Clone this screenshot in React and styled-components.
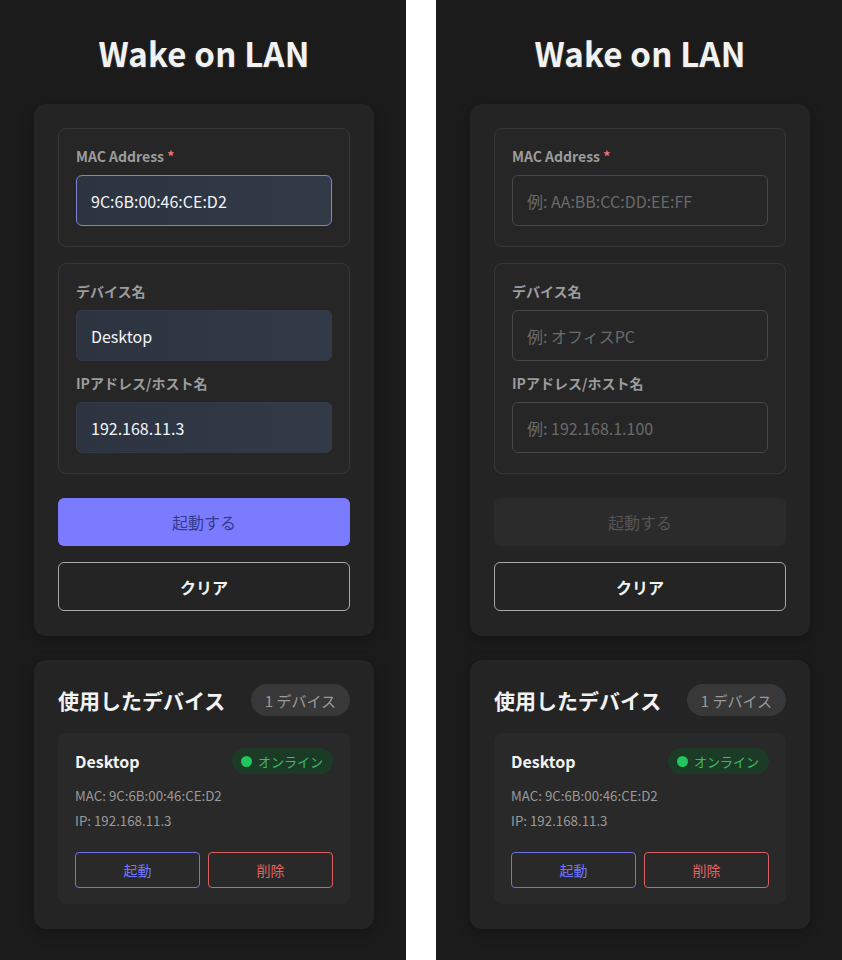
import React from "react";
import styled, { createGlobalStyle, css } from "styled-components";

const Global = createGlobalStyle`
  html, body { margin: 0; padding: 0; background: #ffffff; }
  body { font-family: "Noto Sans CJK JP", "Noto Sans", sans-serif; }
  * { box-sizing: border-box; }
`;

const Screen = styled.div`
  display: flex;
  gap: 30px;
  width: 842px;
  height: 960px;
  overflow: hidden;
`;

const Panel = styled.div`
  width: 406px;
  height: 960px;
  background: #1b1b1b;
  padding: 34px 32px 0 34px;
  display: flex;
  flex-direction: column;
  gap: 24px;
`;

const Title = styled.h1`
  margin: 0 0 6px;
  height: 40px;
  line-height: 39px;
  text-align: center;
  font-size: 33px;
  font-weight: 700;
  color: #f2f2f2;
  letter-spacing: 0.2px;
  text-shadow: 0 1px 2px rgba(255, 255, 255, 0.15);
`;

const Card = styled.div`
  width: 340px;
  background: #242424;
  border-radius: 12px;
  padding: 24px 24px 25px;
  box-shadow: 0 4px 14px rgba(0, 0, 0, 0.25);
  display: flex;
  flex-direction: column;
`;

const Section = styled.div`
  border: 1px solid #383838;
  background: #262626;
  border-radius: 8px;
  padding: 17px 17px 20px;
  display: flex;
  flex-direction: column;
  margin-bottom: ${(p) => p.$mb || 0}px;
`;

const Label = styled.label`
  font-size: 14px;
  line-height: 20px;
  font-weight: 700;
  color: #9c9c9c;
  margin-bottom: 9px;
  margin-top: ${(p) => p.$mt || 0}px;
  span { color: #f07178; }
`;

const Input = styled.input`
  width: 256px;
  height: 51px;
  border-radius: 6px;
  padding: 0 14px;
  font-family: inherit;
  font-size: 16px;
  outline: none;
  color: #f2f4f8;
  ${(p) =>
    p.$filled
      ? css`
          background: linear-gradient(90deg, #2d3440, #323a48);
          border: 1px solid ${p.$focus ? "#7f84d6" : "#323a48"};
        `
      : css`
          background: #262626;
          border: 1px solid #474747;
        `}
  &::placeholder { color: #6a6a6a; }
`;

const PrimaryButton = styled.button`
  width: 292px;
  height: 48px;
  margin-top: 24px;
  border: none;
  border-radius: 6px;
  font-family: inherit;
  font-size: 16px;
  ${(p) =>
    p.disabled
      ? css`
          background: #2b2b2b;
          color: #555555;
        `
      : css`
          background: #7b7bff;
          color: #363a8a;
        `}
`;

const OutlineButton = styled.button`
  width: 292px;
  height: 49px;
  margin-top: 16px;
  background: transparent;
  border: 1px solid #a8a8a8;
  border-radius: 6px;
  font-family: inherit;
  font-size: 16px;
  font-weight: 700;
  color: #f2f2f2;
`;

const ListHeader = styled.div`
  display: flex;
  align-items: center;
  justify-content: space-between;
  height: 32px;
  margin-bottom: 17px;
`;

const ListTitle = styled.h2`
  margin: 0;
  font-size: 21px;
  font-weight: 700;
  color: #f2f2f2;
`;

const CountBadge = styled.div`
  height: 32px;
  padding: 0 14px;
  border-radius: 16px;
  background: #383838;
  color: #9a9a9a;
  font-size: 15px;
  display: flex;
  align-items: center;
`;

const DeviceItem = styled.div`
  background: #292929;
  border-radius: 8px;
  padding: 15px 17px 16px;
  display: flex;
  flex-direction: column;
`;

const DeviceTop = styled.div`
  display: flex;
  align-items: center;
  justify-content: space-between;
  height: 26px;
  margin-bottom: 12px;
`;

const DeviceName = styled.div`
  font-size: 16px;
  font-weight: 700;
  color: #f2f2f2;
`;

const StatusBadge = styled.div`
  display: flex;
  align-items: center;
  gap: 6px;
  height: 26px;
  padding: 0 10px 0 9px;
  border-radius: 13px;
  background: #1c3b27;
  color: #3dbb66;
  font-size: 13px;
`;

const Dot = styled.span`
  width: 11px;
  height: 11px;
  border-radius: 50%;
  background: #22c55e;
`;

const Meta = styled.div`
  font-size: 13.3px;
  line-height: 20px;
  color: #9a9a9a;
  margin-bottom: 5px;
`;

const Actions = styled.div`
  display: grid;
  grid-template-columns: 1fr 1fr;
  gap: 8px;
  margin-top: 16px;
`;

const SmallButton = styled.button`
  height: 36px;
  background: transparent;
  border-radius: 4px;
  font-family: inherit;
  font-size: 14px;
  border: 1px solid ${(p) => (p.$danger ? "#d9605f" : "#6f72e0")};
  color: ${(p) => (p.$danger ? "#e5625f" : "#6f76ff")};
`;

function AppPanel({ filled }) {
  return (
    <Panel>
      <Title>Wake on LAN</Title>
      <Card>
        <Section $mb={16}>
          <Label>
            MAC Address <span>*</span>
          </Label>
          <Input
            readOnly
            $filled={filled}
            $focus={filled}
            value={filled ? "9C:6B:00:46:CE:D2" : ""}
            placeholder="例: AA:BB:CC:DD:EE:FF"
          />
        </Section>
        <Section>
          <Label>デバイス名</Label>
          <Input
            readOnly
            $filled={filled}
            value={filled ? "Desktop" : ""}
            placeholder="例: オフィスPC"
          />
          <Label $mt={12}>IPアドレス/ホスト名</Label>
          <Input
            readOnly
            $filled={filled}
            value={filled ? "192.168.11.3" : ""}
            placeholder="例: 192.168.1.100"
          />
        </Section>
        <PrimaryButton disabled={!filled}>起動する</PrimaryButton>
        <OutlineButton>クリア</OutlineButton>
      </Card>
      <Card>
        <ListHeader>
          <ListTitle>使用したデバイス</ListTitle>
          <CountBadge>1 デバイス</CountBadge>
        </ListHeader>
        <DeviceItem>
          <DeviceTop>
            <DeviceName>Desktop</DeviceName>
            <StatusBadge>
              <Dot />
              オンライン
            </StatusBadge>
          </DeviceTop>
          <Meta>MAC: 9C:6B:00:46:CE:D2</Meta>
          <Meta>IP: 192.168.11.3</Meta>
          <Actions>
            <SmallButton>起動</SmallButton>
            <SmallButton $danger>削除</SmallButton>
          </Actions>
        </DeviceItem>
      </Card>
    </Panel>
  );
}

export default function App() {
  return (
    <>
      <Global />
      <Screen>
        <AppPanel filled />
        <AppPanel filled={false} />
      </Screen>
    </>
  );
}
